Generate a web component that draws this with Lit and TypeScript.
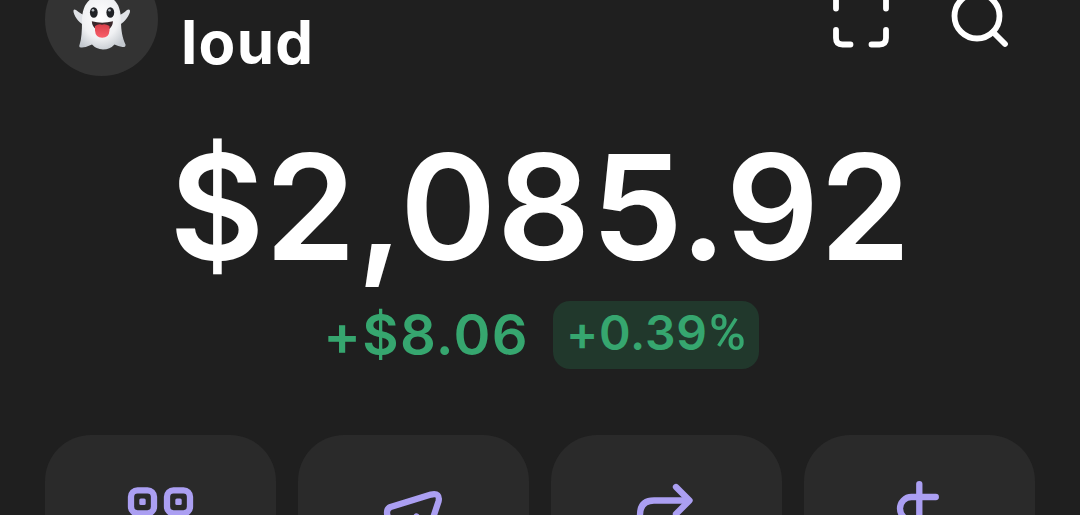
import { LitElement, html, css, svg, SVGTemplateResult } from "lit";
import { customElement, property } from "lit/decorators.js";

interface WalletAction {
  key: string;
  icon: SVGTemplateResult;
}

const ACTIONS: WalletAction[] = [
  {
    key: "receive",
    icon: svg`
      <rect x="3" y="5.300" width="23" height="23" rx="6.500" />
      <rect x="39" y="5.300" width="23" height="23" rx="6.500" />
      <rect x="3" y="41.300" width="23" height="23" rx="6.500" />
      <rect class="fill" x="11.300" y="13.600" width="6.400" height="6.400" rx="1.500" />
      <rect class="fill" x="47.300" y="13.600" width="6.400" height="6.400" rx="1.500" />
      <rect class="fill" x="11.300" y="49.600" width="6.400" height="6.400" rx="1.500" />
    `,
  },
  {
    key: "send",
    icon: svg`
      <path d="M9.500 22L50 9.600Q59.500 7.500 57.500 16.500L43 60Q38 67 33 60L26 44L9 34Q6 32 6 27.500Q6 23.500 9.500 22Z" />
      <path d="M26 44L35.500 31.500" />
    `,
  },
  {
    key: "swap",
    icon: svg`
      <path d="M6 36V30Q6 15.500 20 15.500H54" />
      <path d="M42 2L55.500 15.500L42 29" />
      <path d="M59 37V42Q59 56 45 56H11" />
      <path d="M23 42.500L9.500 56L23 69.500" />
    `,
  },
  {
    key: "buy",
    icon: svg`
      <path d="M32.300 -0.900V68" />
      <path d="M48.800 12H24.500A11.500 11.500 0 0 0 24.500 35H39A11.500 11.500 0 0 1 39 58H14" />
    `,
  },
];

@customElement("wallet-avatar")
export class WalletAvatar extends LitElement {
  protected render() {
    return html`
      <svg width="60" height="56" viewBox="0 0 60 56">
        <defs>
          <radialGradient id="body" cx="0.46" cy="0.4" r="0.65">
            <stop offset="0" stop-color="#ffffff" />
            <stop offset="0.6" stop-color="#f0f1f3" />
            <stop offset="1" stop-color="#c3c8ce" />
          </radialGradient>
          <linearGradient id="tongue" x1="0" y1="0" x2="0" y2="1">
            <stop offset="0" stop-color="#d93f4a" />
            <stop offset="1" stop-color="#f9606b" />
          </linearGradient>
        </defs>
        <path
          fill="#dfe2e6"
          d="M14 31C8 29 3 23 1.500 17Q1 13.500 4 15Q10 20 15 21ZM45 31C51 29 56 23 58 17Q58.500 13.500 55 15Q50 20 44 21Z"
        />
        <path
          fill="url(#body)"
          d="M10 26C10 10 17 1 30 1C43 1 49 10 49 26C49 36 50.500 43 53.500 49.500Q54 52.500 50.500 52Q46 51 42.500 49.500Q38 54.500 31 54.500Q24 54 20 49.500Q15 52 10 52.500Q6.500 53 7.500 50C9.500 44 10 36 10 26Z"
        />
        <ellipse cx="21.800" cy="17.500" rx="3.900" ry="5.300" fill="#202226" />
        <ellipse cx="38.300" cy="17.500" rx="3.900" ry="5.300" fill="#202226" />
        <circle cx="21" cy="15.300" r="1.300" fill="#aeb4ba" />
        <circle cx="37.500" cy="15.300" r="1.300" fill="#aeb4ba" />
        <path fill="#3a282b" d="M19.800 26.300Q30 29 41 26.300Q40.700 32 36 35H25Q20 32 19.800 26.300Z" />
        <path
          fill="url(#tongue)"
          d="M23 31Q27 28.500 30 29.800Q33 28.500 37.500 31V35.500Q37 42.800 30.200 42.800Q23.500 42.800 23 35.500Z"
        />
      </svg>
    `;
  }

  static styles = css`
    :host {
      display: flex;
      justify-content: center;
      box-sizing: border-box;
      width: 113px;
      height: 113px;
      padding-top: 32px;
      border-radius: 50%;
      background: #333333;
    }
  `;
}

@customElement("app-root")
export class AppRoot extends LitElement {
  @property() public name = "loud";
  @property() public balance = "$2,085.92";
  @property() public change = "+$8.06";
  @property() public changePercent = "+0.39";

  protected render() {
    return html`
      <header>
        <wallet-avatar></wallet-avatar>
        <span class="name">${this.name}</span>
        <svg class="scan" width="60" height="60" viewBox="0 0 60 60">
          <path d="M5 19.500V11Q5 5 11 5H19.500M40.500 5H49Q55 5 55 11V19.500M5 41V49Q5 55.500 11.500 55.500H19.500M40.500 55.500H48.500Q55 55.500 55 49V41" />
        </svg>
        <svg class="search" width="60" height="60" viewBox="0 0 60 60">
          <circle cx="27" cy="27" r="22.500" />
          <path d="M43 43L55 55" />
        </svg>
      </header>
      <div class="balance">${this.balance}</div>
      <div class="changes">
        <span class="change">${this.change}</span>
        <span class="badge">${this.changePercent}<span class="unit">%</span></span>
      </div>
      <nav>
        ${ACTIONS.map(
          (action) => html`
            <button class="action" aria-label=${action.key}>
              <svg width="65" height="70" viewBox="0 0 65 70">
                ${action.icon}
              </svg>
            </button>
          `
        )}
      </nav>
    `;
  }

  static styles = css`
    :host {
      display: flex;
      flex-direction: column;
      width: 1080px;
      height: 515px;
      overflow: hidden;
      background: #1f1f1f;
      color: #ffffff;
      font-family: Inter, "Liberation Sans", sans-serif;
      font-weight: 600;
    }

    header {
      display: flex;
      align-items: flex-end;
      flex: none;
      height: 113px;
      margin-top: -37px;
      padding: 0 70px 0 45px;
    }

    .name {
      flex: 1;
      margin-left: 23px;
      padding-bottom: 1px;
      font-size: 60px;
      font-weight: 650;
      line-height: 66px;
      letter-spacing: 1.3px;
    }

    header svg {
      flex: none;
      fill: none;
      stroke: #ffffff;
      stroke-width: 5.8;
      stroke-linecap: round;
      stroke-linejoin: round;
    }

    .scan {
      margin: 0 59px 27px 0;
    }

    .search {
      margin-bottom: 27px;
    }

    .balance {
      flex: none;
      height: 178px;
      margin-top: 42px;
      line-height: 178px;
      padding-left: 1px;
      font-size: 146px;
      font-weight: 630;
      letter-spacing: 0.7px;
      text-align: center;
      white-space: nowrap;
    }

    .changes {
      display: flex;
      flex: none;
      justify-content: center;
      align-items: center;
      gap: 24px;
      height: 69px;
      margin-top: 4px;
      padding-left: 2px;
      color: #36a66f;
    }

    .change {
      font-size: 56px;
      letter-spacing: 1.3px;
    }

    .badge {
      box-sizing: border-box;
      width: 206px;
      height: 68px;
      border-radius: 17px;
      background: #21382c;
      font-size: 48px;
      font-weight: 600;
      line-height: 64px;
      letter-spacing: 0.8px;
      text-align: center;
      white-space: nowrap;
    }

    .unit {
      margin-left: 1px;
      font-family: Roboto, "Liberation Sans", sans-serif;
      font-size: 50px;
      font-weight: 500;
      line-height: 1;
      letter-spacing: 0;
    }

    nav {
      display: grid;
      flex: none;
      grid-template-columns: repeat(4, 231px);
      gap: 22px;
      margin-top: 66px;
      padding-left: 45px;
    }

    .action {
      display: flex;
      justify-content: center;
      height: 220px;
      padding: 50px 0 0;
      border: none;
      border-radius: 46px;
      background: #2a2a2a;
    }

    .action svg {
      overflow: visible;
      fill: none;
      stroke: #ab9ff2;
      stroke-width: 6.3;
      stroke-linecap: round;
      stroke-linejoin: round;
    }

    .action .fill {
      fill: #ab9ff2;
      stroke: none;
    }
  `;
}

declare global {
  interface HTMLElementTagNameMap {
    "app-root": AppRoot;
    "wallet-avatar": WalletAvatar;
  }
}
